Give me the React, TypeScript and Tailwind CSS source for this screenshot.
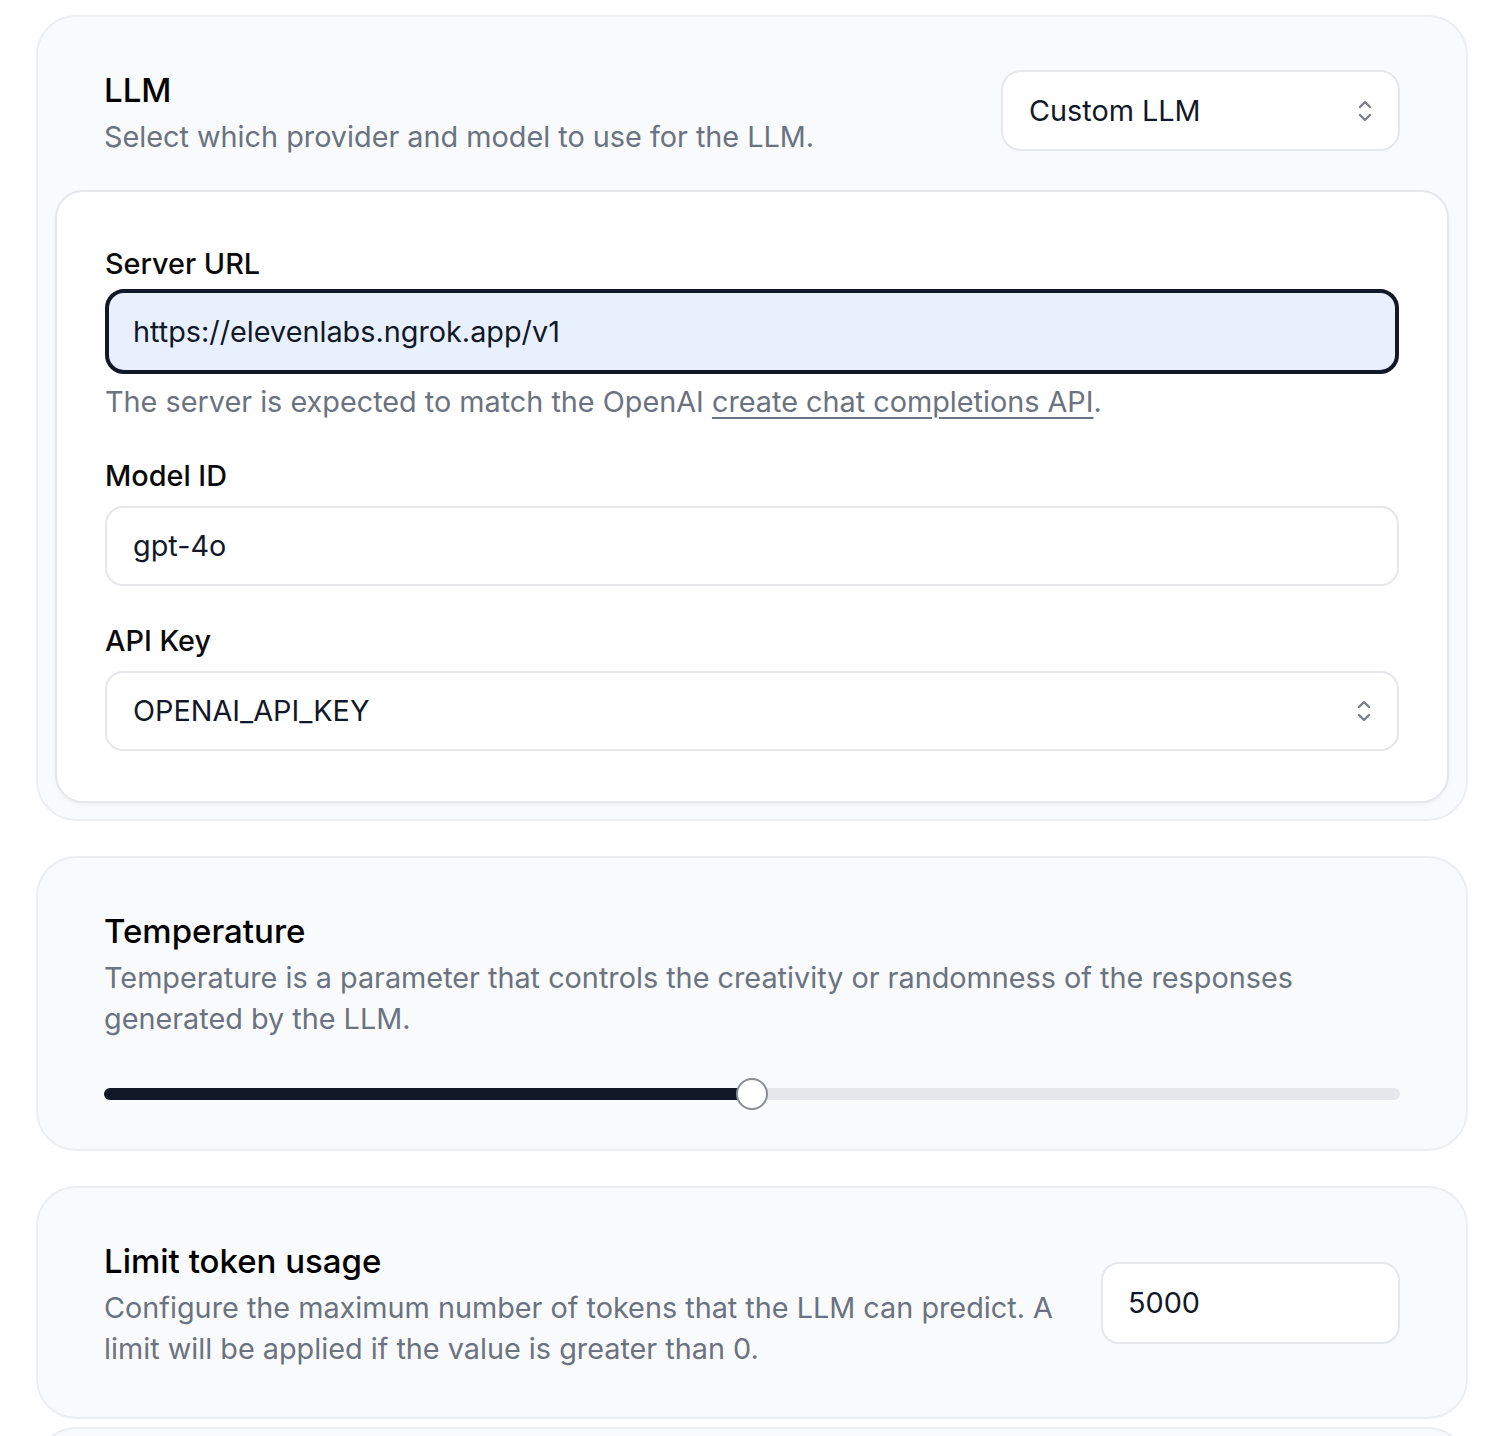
import React from "react";

const font = { fontFamily: "Inter, 'Noto Sans', sans-serif" };

const Chevrons = () => (
	<svg width="14" height="24" viewBox="0 0 14 24" fill="none" stroke="#7b7f87" strokeWidth="2.4" strokeLinecap="round" strokeLinejoin="round">
		<path d="M2 8 7 3l5 5" />
		<path d="M2 16l5 5 5-5" />
	</svg>
);

const Section = ({ children }: { children: React.ReactNode }) => (
	<div className="rounded-[40px] border-2 border-[#eceef1] bg-[#f8fafc]">{children}</div>
);

const Heading = ({ title, text }: { title: string; text: React.ReactNode }) => (
	<div>
		<h2 className="text-[33px] leading-[48px] font-medium text-black">{title}</h2>
		<p className="mt-[2px] text-[28.8px] leading-[41px] text-[#6b7280]">{text}</p>
	</div>
);

const Label = ({ children }: { children: React.ReactNode }) => (
	<label className="block text-[28.8px] leading-[40px] font-medium text-[#0b0b0c]">{children}</label>
);

const App = () => {
	return (
		<div className="min-h-screen bg-white pt-[15px] pl-[36px] pr-[24px] pb-[8px]" style={font}>
			<div className="flex flex-col">
				{/* LLM */}
				<Section>
					<div className="px-[17px] pt-[17px] pb-[16px]">
						<div className="flex items-center justify-between pt-[32px] pb-[33px] pl-[49px] pr-[49px]">
							<Heading title="LLM" text="Select which provider and model to use for the LLM." />
							<div className="-mt-[2px] flex h-[81px] w-[399px] items-center justify-between rounded-[20px] border-2 border-[#e7e8eb] bg-white pl-[26px] pr-[26px]">
								<span className="text-[28.8px] text-[#111827]">Custom LLM</span>
								<Chevrons />
							</div>
						</div>
						<div className="rounded-[28px] border-2 border-[#e6e7ea] bg-white px-[48px] pt-[52px] pb-[50px] shadow-[0_2px_4px_rgba(0,0,0,0.04)]">
							<Label>Server URL</Label>
							<div className="mt-[5px] flex h-[85px] items-center rounded-[19px] border-[4px] border-[#111827] bg-[#e8f0fe] px-[24px]">
								<span className="text-[28.8px] text-[#111827]">https://elevenlabs.ngrok.app/v1</span>
							</div>
							<p className="mt-[8px] text-[28.8px] leading-[40px] text-[#6b7280]">
								The server is expected to match the OpenAI{" "}
								<span className="underline decoration-[1.5px] underline-offset-[5px]">create chat completions API</span>.
							</p>
							<div className="mt-[34px]">
								<Label>Model ID</Label>
								<div className="mt-[10px] flex h-[80px] items-center rounded-[18px] border-2 border-[#e6e7ea] bg-white px-[26px]">
									<span className="text-[28.8px] text-[#111827]">gpt-4o</span>
								</div>
							</div>
							<div className="mt-[35px]">
								<Label>API Key</Label>
								<div className="mt-[10px] flex h-[80px] items-center justify-between rounded-[18px] border-2 border-[#e6e7ea] bg-white pl-[26px] pr-[26px]">
									<span className="text-[28.8px] text-[#111827]">OPENAI_API_KEY</span>
									<Chevrons />
								</div>
							</div>
						</div>
					</div>
				</Section>

				{/* Temperature */}
				<div className="mt-[35px]">
					<Section>
						<div className="px-[66px] pt-[49px] pb-[39px]">
							<Heading
								title="Temperature"
								text="Temperature is a parameter that controls the creativity or randomness of the responses generated by the LLM."
							/>
							<div className="relative mt-[39px] flex h-[32px] items-center">
								<div className="h-[12px] w-full rounded-full bg-[#e5e7eb]">
									<div className="h-full rounded-full bg-[#111827]" style={{ width: "50%" }} />
								</div>
								<div
									className="absolute top-0 h-[32px] w-[32px] -translate-x-1/2 rounded-full border-2 border-[#8a8d93] bg-white"
									style={{ left: "50%" }}
								/>
							</div>
						</div>
					</Section>
				</div>

				{/* Limit token usage */}
				<div className="mt-[35px]">
					<Section>
						<div className="flex items-center justify-between gap-[40px] px-[66px] pt-[49px] pb-[48px]">
							<div className="max-w-[960px]">
								<Heading
									title="Limit token usage"
									text="Configure the maximum number of tokens that the LLM can predict. A limit will be applied if the value is greater than 0."
								/>
							</div>
							<div className="flex h-[82px] w-[299px] shrink-0 items-center rounded-[18px] border-2 border-[#e6e7ea] bg-white px-[25px]">
								<span className="text-[28.8px] text-[#111827]">5000</span>
							</div>
						</div>
					</Section>
				</div>

				<div className="mt-[8px]">
					<Section>
						<div className="h-[80px]" />
					</Section>
				</div>
			</div>
		</div>
	);
};

export default App;
